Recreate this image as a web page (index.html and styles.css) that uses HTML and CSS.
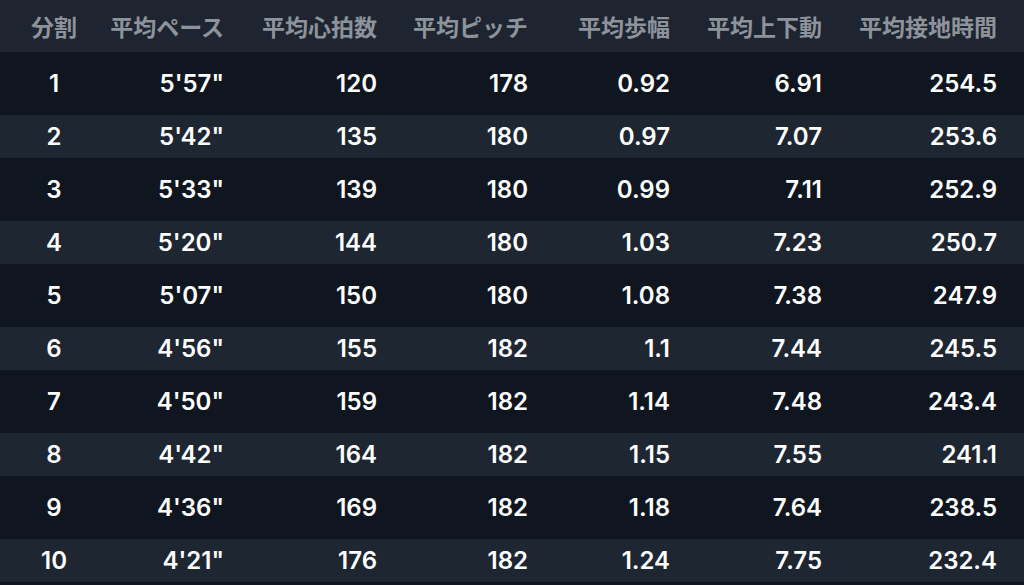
FILE: index.html
```html
<!DOCTYPE html>
<html lang="ja">
<head>
<meta charset="utf-8">
<link rel="stylesheet" href="styles.css">
</head>
<body>
<div class="table">
  <div class="row head">
    <div class="c first">分割</div><div class="c">平均ペース</div><div class="c">平均心拍数</div><div class="c">平均ピッチ</div><div class="c">平均歩幅</div><div class="c">平均上下動</div><div class="c">平均接地時間</div>
  </div>
  <div class="row dark"><div class="c first">1</div><div class="c">5'57"</div><div class="c">120</div><div class="c">178</div><div class="c">0.92</div><div class="c">6.91</div><div class="c">254.5</div></div>
  <div class="row light"><div class="c first">2</div><div class="c">5'42"</div><div class="c">135</div><div class="c">180</div><div class="c">0.97</div><div class="c">7.07</div><div class="c">253.6</div></div>
  <div class="row dark"><div class="c first">3</div><div class="c">5'33"</div><div class="c">139</div><div class="c">180</div><div class="c">0.99</div><div class="c">7.11</div><div class="c">252.9</div></div>
  <div class="row light"><div class="c first">4</div><div class="c">5'20"</div><div class="c">144</div><div class="c">180</div><div class="c">1.03</div><div class="c">7.23</div><div class="c">250.7</div></div>
  <div class="row dark"><div class="c first">5</div><div class="c">5'07"</div><div class="c">150</div><div class="c">180</div><div class="c">1.08</div><div class="c">7.38</div><div class="c">247.9</div></div>
  <div class="row light"><div class="c first">6</div><div class="c">4'56"</div><div class="c">155</div><div class="c">182</div><div class="c">1.1</div><div class="c">7.44</div><div class="c">245.5</div></div>
  <div class="row dark"><div class="c first">7</div><div class="c">4'50"</div><div class="c">159</div><div class="c">182</div><div class="c">1.14</div><div class="c">7.48</div><div class="c">243.4</div></div>
  <div class="row light"><div class="c first">8</div><div class="c">4'42"</div><div class="c">164</div><div class="c">182</div><div class="c">1.15</div><div class="c">7.55</div><div class="c">241.1</div></div>
  <div class="row dark"><div class="c first">9</div><div class="c">4'36"</div><div class="c">169</div><div class="c">182</div><div class="c">1.18</div><div class="c">7.64</div><div class="c">238.5</div></div>
  <div class="row light"><div class="c first">10</div><div class="c">4'21"</div><div class="c">176</div><div class="c">182</div><div class="c">1.24</div><div class="c">7.75</div><div class="c">232.4</div></div>
</div>
</body>
</html>
```
FILE: styles.css
```css
html, body {
  margin: 0;
  padding: 0;
  background: #10161f;
  width: 1024px;
  height: 585px;
  overflow: hidden;
}
.table {
  display: flex;
  flex-direction: column;
  font-family: Inter, "Noto Sans CJK JP", sans-serif;
}
.row {
  display: grid;
  grid-template-columns: 108px 116px 153px 151px 142px 152px 175px;
  padding-right: 27px;
  align-items: center;
}
.c {
  text-align: right;
  white-space: nowrap;
}
.c.first {
  text-align: center;
}
.head {
  height: 52px;
  background: #1e2530;
  color: #8d939b;
  font-family: "Noto Sans CJK JP", sans-serif;
  font-size: 23px;
  font-weight: 600;
}
.dark, .light {
  color: #ffffff;
  font-size: 24px;
  font-weight: 600;
}
.dark {
  height: 63px;
  background: #10161f;
}
.light {
  height: 43px;
  background: #1e2632;
}
```
